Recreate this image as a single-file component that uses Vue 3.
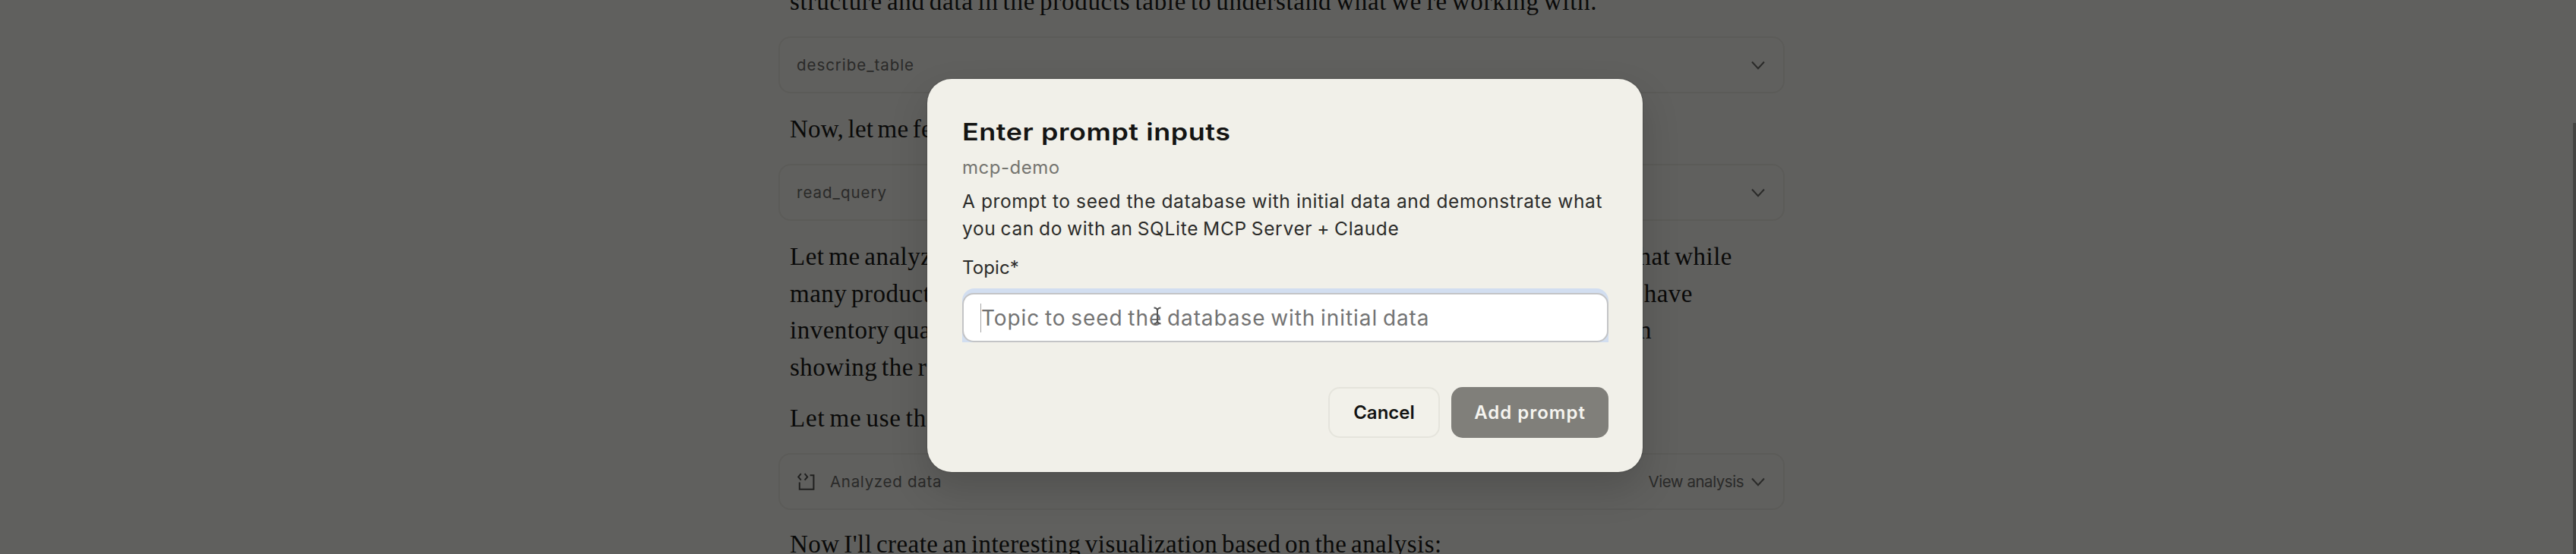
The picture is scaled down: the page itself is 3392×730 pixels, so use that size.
<script setup>
const prompt = {
  server: 'mcp-demo',
  placeholder: 'Topic to seed the database with initial data',
}
</script>

<template>
  <div class="app">
    <main class="chat">
      <p class="msg first">structure and data in the products table to understand what we're working with.</p>

      <div class="tool">
        <span class="name describe">describe_table</span>
        <svg class="chev" viewBox="0 0 20 12"><path d="M2 1.5 10 10.2 18 1.5" /></svg>
      </div>

      <p class="msg after fetch">Now, let me fetch</p>

      <div class="tool">
        <span class="name read">read_query</span>
        <svg class="chev" viewBox="0 0 20 12"><path d="M2 1.5 10 10.2 18 1.5" /></svg>
      </div>

      <div class="msg after rows">
        <div class="row"><span>Let me analyze</span><span class="r1">that while</span></div>
        <div class="row"><span>many products</span><span class="r2">have</span></div>
        <div class="row"><span>inventory quan</span><span class="r3">in</span></div>
        <div class="row"><span>showing the r</span></div>
      </div>

      <p class="msg use">Let me use the</p>

      <div class="tool">
        <svg class="icon" viewBox="0 0 26 26">
          <path d="M5.8 2.2 2.2 6.4l3.6 4.2M10.6 2.2l3.6 4.2-3.6 4.2M3.8 13.6v9.2h18.6V4.2h-4.8" />
        </svg>
        <span class="name analyzed">Analyzed data</span>
        <span class="name view">View analysis</span>
        <svg class="chev" viewBox="0 0 20 12"><path d="M2 1.5 10 10.2 18 1.5" /></svg>
      </div>

      <p class="msg after last">Now I'll create an interesting visualization based on the analysis:</p>
    </main>

    <div class="backdrop">
      <section class="modal" role="dialog">
        <h1>Enter prompt inputs</h1>
        <div class="server">{{ prompt.server }}</div>
        <div class="desc">
          <div class="d1">A prompt to seed the database with initial data and demonstrate what</div>
          <div class="d2">you can do with an SQLite MCP Server + Claude</div>
        </div>
        <div class="label">Topic*</div>
        <div class="ring">
          <div class="field">
            <span class="caret"></span>
            <span class="placeholder">{{ prompt.placeholder }}</span>
            <svg class="ibeam" viewBox="0 0 12 24">
              <path d="M1.5 1.5Q5 1.5 6 4.5 7 1.5 10.5 1.5M6 4.5v15M1.5 22.5Q5 22.5 6 19.5 7 22.5 10.5 22.5" />
            </svg>
          </div>
        </div>
        <footer>
          <button class="cancel">Cancel</button>
          <button class="add"><span>Add prompt</span></button>
        </footer>
      </section>
    </div>

    <div class="scrollbar"></div>
  </div>
</template>

<style>
body { margin: 0; overflow: hidden; }
</style>

<style scoped>
* { box-sizing: border-box; }
.app {
  position: relative;
  width: 3392px;
  height: 730px;
  overflow: hidden;
  background: #f0f0eb;
  font-family: Inter, "Liberation Sans", sans-serif;
}
.chat { width: 1325px; margin-left: 1025px; }
.msg {
  margin: 0;
  padding: 0 15px;
  font: 33px/48.8px "Liberation Serif", serif;
  letter-spacing: .5px;
  word-spacing: -3px;
  color: #191918;
  white-space: nowrap;
}
.first { margin-top: -22px; margin-bottom: 21px; letter-spacing: .72px; }
.after { padding-top: 23px; padding-bottom: 21px; }
p.after { height: 93px; }
.fetch { letter-spacing: .2px; }
.rows { height: 236px; padding-bottom: 0; }
.row { display: flex; justify-content: space-between; height: 48.8px; }
.r1 { margin-right: 54px; }
.r2 { margin-right: 106px; }
.r3 { margin-right: 160px; }
.use { height: 70px; letter-spacing: .8px; }
.last { padding-top: 21.5px; letter-spacing: .45px; }
.tool {
  display: flex;
  align-items: center;
  height: 75px;
  padding: 2px 23px 0 22px;
  border: 2px solid #e4e3dd;
  border-radius: 16px;
}
.name { font-size: 20.5px; line-height: 30px; color: #6a6a67; white-space: nowrap; }
.describe { letter-spacing: .95px; }
.read { letter-spacing: 1px; }
.analyzed { margin-left: 18px; letter-spacing: .7px; }
.view { margin-left: auto; margin-right: 9px; letter-spacing: -.47px; }
.chev { width: 20px; height: 12px; margin-left: auto; fill: none; stroke: #6a6a67; stroke-width: 2; }
.view + .chev { margin-left: 0; }
.icon { width: 26px; height: 26px; fill: none; stroke: #50504e; stroke-width: 2; }

.backdrop { position: absolute; inset: 0; background: rgba(0, 0, 0, .6); }
.modal {
  width: 942px;
  height: 518px;
  margin: 104px 0 0 1221px;
  padding: 50px 46px 44px;
  border-radius: 32px;
  background: #f1f0e9;
  box-shadow: 0 22px 50px rgba(0, 0, 0, .16), 0 0 2px rgba(0, 0, 0, .35);
  color: #2c2c2a;
  white-space: nowrap;
}
h1 {
  width: max-content;
  margin: 0;
  font-size: 31px;
  line-height: 40px;
  font-weight: 570;
  letter-spacing: .5px;
  color: #141413;
  transform: scaleX(1.158);
  transform-origin: left;
}
.server { margin-top: 9px; font-size: 24px; line-height: 36px; letter-spacing: .5px; color: #757570; }
.desc { margin-top: 7.5px; font-size: 24.5px; line-height: 36.2px; }
.d1 { letter-spacing: .59px; }
.d2 { letter-spacing: .68px; word-spacing: -1.6px; }
.label { margin-top: 16px; font-size: 24px; line-height: 36px; letter-spacing: .1px; }
.ring {
  width: 851px;
  margin-top: 9.1px;
  padding-top: 6px;
  border-radius: 16px 16px 0 0;
  background: #d2def0;
}
.field {
  position: relative;
  display: flex;
  align-items: center;
  height: 65px;
  padding-left: 22px;
  border: 2px solid #c3c4c6;
  border-radius: 15px;
  background: #fff;
}
.caret { width: 1px; height: 38px; background: #a5a5a5; }
.placeholder { font-size: 28px; line-height: 40px; letter-spacing: .92px; word-spacing: -2px; color: #737373; }
.ibeam { position: absolute; left: 249px; top: 16px; width: 12px; height: 24px; fill: none; stroke: #555; stroke-width: 2; }
footer { display: flex; justify-content: flex-end; gap: 15px; margin: 59px -1px 0 0; }
button {
  height: 67px;
  padding: 1px 0 0;
  border: 0;
  border-radius: 15px;
  font: 600 24px/36px Inter, "Liberation Sans", sans-serif;
}
.cancel { width: 147px; border: 2px solid #e5e4dc; background: #f2f1ea; color: #141413; }
.add { width: 207px; background: #807f7a; color: #f5f4ef; letter-spacing: 1px; }
.scrollbar { position: absolute; top: 162px; right: 0; bottom: 0; width: 4px; background: #454543; }
</style>
